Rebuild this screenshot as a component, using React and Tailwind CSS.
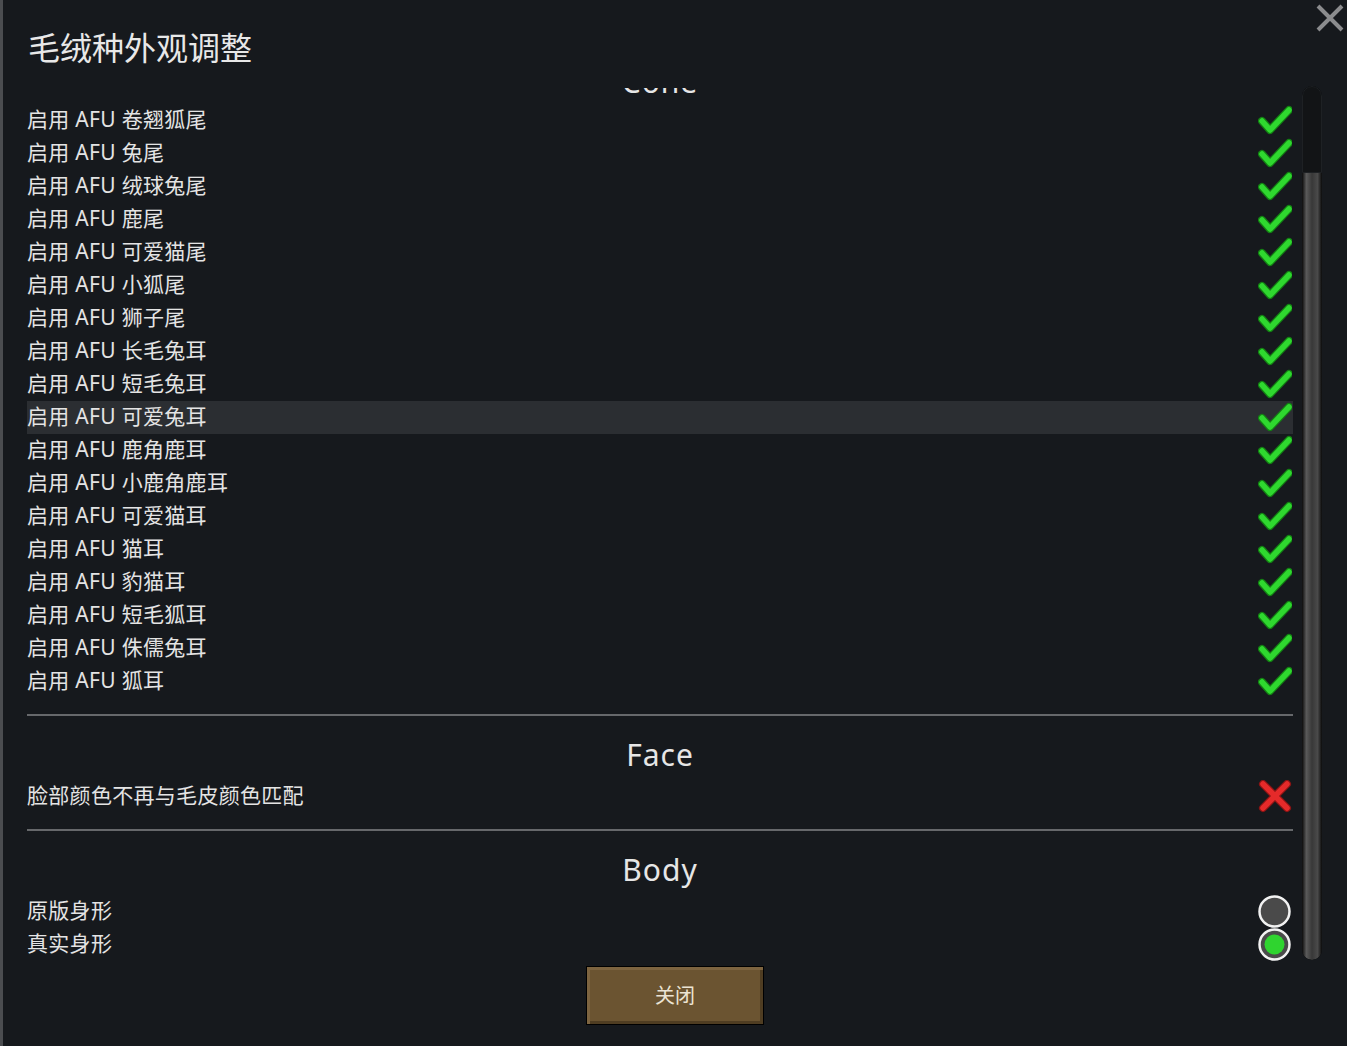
import React from "react";

const font = { fontFamily: '"Noto Sans", "Noto Sans CJK SC", sans-serif' };

const coneRows = [
  "卷翘狐尾", "兔尾", "绒球兔尾", "鹿尾", "可爱猫尾", "小狐尾", "狮子尾", "长毛兔耳", "短毛兔耳",
  "可爱兔耳", "鹿角鹿耳", "小鹿角鹿耳", "可爱猫耳", "猫耳", "豹猫耳", "短毛狐耳", "侏儒兔耳", "狐耳",
];

function Check() {
  return (
    <svg width="34" height="33" viewBox="0 0 34 33">
      <path d="M4 17 L12 26 L31 6" fill="none" stroke="#138013" strokeWidth="8" strokeLinecap="round" strokeLinejoin="round" />
      <path d="M4 17 L12 26 L31 6" fill="none" stroke="#2fd82f" strokeWidth="5.5" strokeLinecap="round" strokeLinejoin="round" />
    </svg>
  );
}

function Cross() {
  return (
    <svg width="34" height="33" viewBox="0 0 34 33">
      <path d="M5 4 L29 28 M29 4 L5 28" fill="none" stroke="#8a1414" strokeWidth="8" strokeLinecap="round" />
      <path d="M5 4 L29 28 M29 4 L5 28" fill="none" stroke="#e52a2a" strokeWidth="5.5" strokeLinecap="round" />
    </svg>
  );
}

function Radio({ on }) {
  return (
    <svg width="34" height="33" viewBox="0 0 34 33">
      <circle cx="16.5" cy="16.5" r="15" fill="#4a4a4a" stroke="#f2f2f2" strokeWidth="2.5" />
      {on && <circle cx="16.5" cy="16.5" r="10" fill="#2fd42f" />}
    </svg>
  );
}

function Row({ label, children, active }) {
  return (
    <div className={`h-[33px] flex items-center justify-between pr-[1px] ${active ? "bg-[#2b2e32]" : ""}`}>
      <span className="text-[21px] leading-[31px] pb-[2px] tracking-[0.3px] text-[#e4e4e4]">{label}</span>
      {children}
    </div>
  );
}

function Section({ title, first, children }) {
  return (
    <div>
      {!first && <div className="mt-[16px] h-[2px] bg-[#66686b]" />}
      <div className={`h-[64px] text-center text-[30px] leading-[32px] tracking-[1px] text-[#e6e6e6] ${first ? "mt-[-48px] pt-[26px]" : "pt-[23px]"}`}>
        {title}
      </div>
      {children}
    </div>
  );
}

export default function App() {
  return (
    <div style={font} className="w-[1347px] h-[1046px] bg-[#16191d] border-l-[3px] border-[#4b4d50] relative flex flex-col overflow-hidden">
      <svg className="absolute right-[3px] top-[4px]" width="28" height="28" viewBox="0 0 28 28">
        <path d="M2 2 L26 26 M26 2 L2 26" stroke="#8b8c8e" strokeWidth="4" />
      </svg>

      <div className="h-[88px] pl-[25px] pt-[28px]">
        <h1 className="text-[32px] leading-[40px] text-[#e8e8e8]">毛绒种外观调整</h1>
      </div>

      <div className="h-[874px] flex pl-[24px]">
        <div className="w-[1266px] overflow-hidden">
          <Section title="Cone" first>
            {coneRows.map((r, i) => (
              <Row key={r} label={`启用 AFU ${r}`} active={i === 9}>
                <Check />
              </Row>
            ))}
          </Section>
          <Section title="Face">
            <Row label="脸部颜色不再与毛皮颜色匹配">
              <Cross />
            </Row>
          </Section>
          <Section title="Body">
            <Row label="原版身形">
              <Radio />
            </Row>
            <Row label="真实身形">
              <Radio on />
            </Row>
          </Section>
        </div>

        <div className="ml-[9px] mt-[-2px] w-[20px] h-[874px] rounded-full overflow-hidden flex flex-col bg-[#0c0d0f]">
          <div className="h-[87px] bg-[#121416] rounded-t-full border border-[#1e2124]" />
          <div className="flex-1 rounded-b-full bg-[linear-gradient(to_right,#0b0b0b,#5a5a5a_22%,#383838_50%,#4a4a4a_78%,#0b0b0b)]" />
        </div>
      </div>

      <div className="flex justify-center mt-[4px]">
        <button className="w-[178px] h-[59px] bg-[#6b5431] border border-black shadow-[inset_3px_3px_0_#7d6440,inset_-3px_-3px_0_#4f3d22] text-[20px] text-[#ece4d4]">
          关闭
        </button>
      </div>
    </div>
  );
}
